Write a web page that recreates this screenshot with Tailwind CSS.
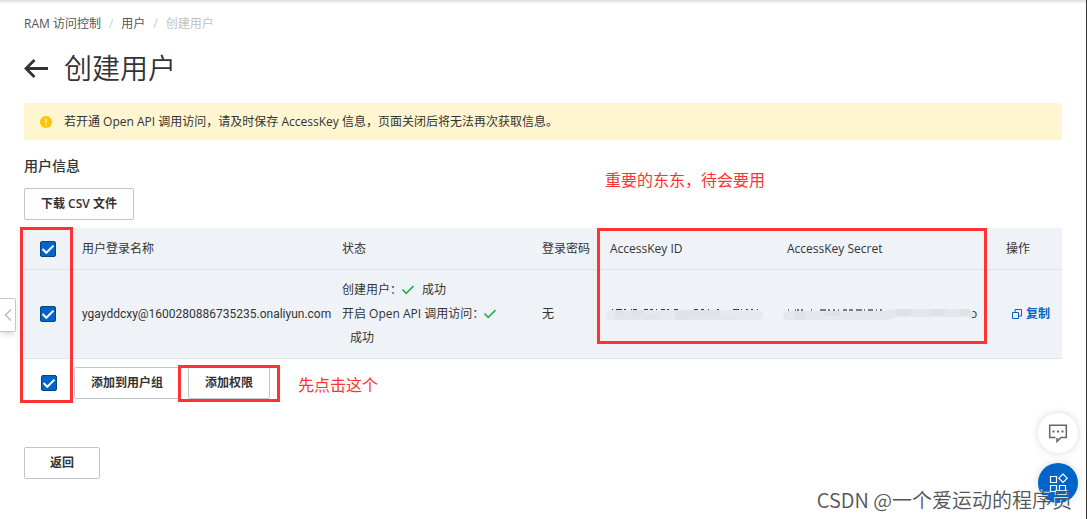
<!DOCTYPE html>
<html lang="zh-CN">
<head>
<meta charset="utf-8">
<title>创建用户</title>
<script src="https://cdn.jsdelivr.net/npm/@tailwindcss/browser@4"></script>
</head>
<body class="relative min-h-screen border-r border-[#333] bg-white font-['Open_Sans','Noto_Sans_CJK_SC',sans-serif] text-xs text-[#333]">
<div class="h-1 bg-linear-to-b from-[#dcdcdc] to-white"></div>
<main class="px-6">
  <nav aria-label="面包屑" class="flex h-10 items-center gap-2 text-[#555]">
    <a href="#">RAM 访问控制</a><span class="text-[#ccc]">/</span>
    <a href="#">用户</a><span class="text-[#ccc]">/</span>
    <span class="text-[#c1c1c1]">创建用户</span>
  </nav>
  <header class="flex h-12 items-center gap-4">
    <a href="#" aria-label="返回上一页">
      <svg class="h-6 w-6" viewBox="0 0 24 24" fill="none" stroke="#333" stroke-width="2.800"><path d="M24 12.500H2M10.500 4L2 12.500L10.500 21"/></svg>
    </a>
    <h1 class="text-[28px] leading-9 font-[350]">创建用户</h1>
  </header>
  <div role="alert" class="mt-[11px] flex h-[37px] items-center gap-3 rounded-xs bg-[#fff6d1] px-4">
    <svg class="h-3 w-3" viewBox="0 0 12 12"><circle cx="6" cy="6" r="6" fill="#ffc400"/><path d="M6 2.500V7M6 8.200V9.600" stroke="#fff6d1" stroke-width="1.400"/></svg>
    <p>若开通 Open API 调用访问，请及时保存 AccessKey 信息，页面关闭后将无法再次获取信息。</p>
  </div>

  <section class="relative pt-4">
    <h2 class="text-sm leading-5 font-medium">用户信息</h2>
    <p class="absolute top-7 left-[581px] text-base leading-6 text-[#ff3333]">重要的东东，待会要用</p>
    <button type="button" class="mt-3 block h-8 rounded-xs border border-[#c0c6cc] px-4 font-semibold">下载 CSV 文件</button>
  </section>

  <section class="relative mt-2">
    <table class="w-full table-fixed border-separate border-spacing-0 text-left">
      <colgroup>
        <col class="w-12"><col class="w-[260px]"><col class="w-[200px]"><col class="w-[68px]"><col class="w-[177px]"><col class="w-[219px]"><col>
      </colgroup>
      <thead>
        <tr class="h-[42px] bg-[#eff3f8]">
          <th class="border-b border-[#dee3e7] pl-4"><label class="relative block h-4 w-4"><input type="checkbox" checked aria-label="全选" class="block h-4 w-4 appearance-none rounded-xs border border-[#00458a] bg-[#0064c8]"><svg class="pointer-events-none absolute inset-0 h-4 w-4" viewBox="0 0 16 16" fill="none" stroke="#fff" stroke-width="2"><path d="M2.500 8L6.300 11.800L13.500 4.600"/></svg></label></th>
          <th class="border-b border-[#dee3e7] pl-[10px] font-normal">用户登录名称</th>
          <th class="border-b border-[#dee3e7] pl-[10px] font-normal">状态</th>
          <th class="border-b border-[#dee3e7] pl-[10px] font-normal">登录密码</th>
          <th class="border-b border-[#dee3e7] pl-[10px] font-normal">AccessKey ID</th>
          <th class="border-b border-[#dee3e7] pl-[10px] font-normal">AccessKey Secret</th>
          <th class="border-b border-[#dee3e7] pl-[10px] font-normal">操作</th>
        </tr>
      </thead>
      <tbody>
        <tr class="h-[89px] bg-[#eff3f8]">
          <td class="border-b border-[#dee3e7] pl-4"><label class="relative block h-4 w-4"><input type="checkbox" checked aria-label="选择用户" class="block h-4 w-4 appearance-none rounded-xs border border-[#00458a] bg-[#0064c8]"><svg class="pointer-events-none absolute inset-0 h-4 w-4" viewBox="0 0 16 16" fill="none" stroke="#fff" stroke-width="2"><path d="M2.500 8L6.300 11.800L13.500 4.600"/></svg></label></td>
          <td class="border-b border-[#dee3e7] pl-[10px] font-['Roboto','Noto_Sans_CJK_SC',sans-serif]">ygayddcxy@1600280886735235.onaliyun.com</td>
          <td class="border-b border-[#dee3e7] pl-[10px] leading-6">
            <p class="flex items-center">创建用户：<svg class="h-3 w-3" viewBox="0 0 12 12" fill="none" stroke="#22b14c" stroke-width="1.600"><path d="M.5 5.500L4.200 9.300L11.500 2"/></svg><span class="ml-2">成功</span></p>
            <p class="flex items-center whitespace-nowrap">开启 Open API 调用访问：<svg class="h-3 w-3" viewBox="0 0 12 12" fill="none" stroke="#22b14c" stroke-width="1.600"><path d="M.5 5.500L4.200 9.300L11.500 2"/></svg></p>
            <p class="pl-2">成功</p>
          </td>
          <td class="border-b border-[#dee3e7] pl-[10px]">无</td>
          <td class="border-b border-[#dee3e7] pl-1.5">
            <svg role="img" aria-label="已隐藏" class="h-4 w-[158px]" viewBox="0 0 158 16">
              <path d="M6 3.500H158" stroke="#3a3a3a" stroke-dasharray="1 3 6 2 2 5 1 1 4 7 4 2 3 3 1 4 4 2 2 5 4 16 4 3 3 4 1 8 2 14 6 2 1 4 2 3 2 4 1 90"/>
              <rect y="4" width="157" height="10" rx="5" fill="#e6eaf0"/>
              <path d="M9 4h9v4h-9zM24 4h15v4H24zM69 4h45v5H69zM69 9h15v5H69z" fill="#dfe3e8"/>
              <path d="M9 8h45v6H9zM84 9h45v5H84z" fill="#e2e6eb"/>
            </svg>
          </td>
          <td class="border-b border-[#dee3e7] pl-1.5">
            <svg role="img" aria-label="已隐藏" class="h-4 w-[196px]" viewBox="0 0 196 16">
              <path d="M5 4H103" stroke="#555" stroke-width="1.500" stroke-dasharray="1 6 1 1 2 2 2 8 1 8 6 2 2 3 2 3 1 4 4 2 4 3 6 2 1 3 5 3 1 3 2 90"/>
              <text x="187" y="12" font-size="12" fill="#333">o</text>
              <path d="M5 5H100L114 3H185Q192 5 192 11H114L103 14H6Q0 14 0 10Q0 6 5 5Z" fill="#e4e8ec"/>
              <path d="M12 5h10v9H12zM42 5h15v5H42zM114 3h14v6h-14zM147 3h15v6h-15zM177 3h10v6h-10z" fill="#dee1e6"/>
            </svg>
          </td>
          <td class="border-b border-[#dee3e7] pl-4 text-[#0064c8]"><button type="button" class="flex items-center gap-1 font-semibold whitespace-nowrap"><svg class="h-[10px] w-[10px]" viewBox="0 0 10 10" fill="none" stroke="#0064c8"><path d="M.5 3.500H6.500V9.500H.5ZM3 3.500V.5H9.500V7H6.500"/></svg>复制</button></td>
        </tr>
      </tbody>
    </table>
    <div class="flex h-12 items-center pl-[17px]">
      <label class="relative block h-4 w-4"><input type="checkbox" checked aria-label="选择全部用户" class="block h-4 w-4 appearance-none rounded-xs border border-[#00458a] bg-[#0064c8]"><svg class="pointer-events-none absolute inset-0 h-4 w-4" viewBox="0 0 16 16" fill="none" stroke="#fff" stroke-width="2"><path d="M2.500 8L6.300 11.800L13.500 4.600"/></svg></label>
      <button type="button" class="ml-[17px] h-8 rounded-xs border border-[#c0c6cc] px-4 font-semibold">添加到用户组</button>
      <div class="relative ml-2">
        <button type="button" class="block h-8 rounded-xs border border-[#c0c6cc] px-4 font-semibold">添加权限</button>
        <div class="pointer-events-none absolute -inset-x-[10px] -top-0.5 -bottom-[3px] border-3 border-[#ff3333]"></div>
      </div>
      <p class="mt-1 ml-7 text-base leading-6 text-[#ff3333]">先点击这个</p>
    </div>
    <div class="pointer-events-none absolute -top-px -left-1 h-44 w-[53px] border-3 border-[#ff3333]"></div>
    <div class="pointer-events-none absolute top-0 right-[75px] left-[573px] h-[116px] border-3 border-[#ff3333]"></div>
  </section>
  <button type="button" class="mt-10 h-8 rounded-xs border border-[#c0c6cc] px-[25px] font-semibold">返回</button>
</main>

<button type="button" aria-label="收起侧栏" class="absolute top-[298px] left-0 flex h-[34px] w-4 items-center justify-center rounded-r-xs border border-l-0 border-[#c4c8cd] bg-white shadow-md">
  <svg class="h-3 w-2" viewBox="0 0 8 12" fill="none" stroke="#b8bcc0" stroke-width="1.500"><path d="M7 .5L1.500 6L7 11.500"/></svg>
</button>
<div class="absolute right-2 bottom-4 flex flex-col gap-[10px]">
  <button type="button" aria-label="反馈" class="flex h-10 w-10 items-center justify-center rounded-full bg-white shadow-[0_0_8px_rgba(0,0,0,0.15)]">
    <svg class="h-5 w-5" viewBox="0 0 20 20" fill="none" stroke="#666" stroke-width="1.500"><path d="M7.500 14.500H1.700V2.200H18.300V14.500H13L9 18.500V15"/><path d="M4.500 8.500H6.500M9 8.500H11M13.500 8.500H15.500" stroke-width="2"/></svg>
  </button>
  <button type="button" aria-label="应用" class="flex h-10 w-10 items-center justify-center rounded-full bg-[#0064c8] shadow-[0_0_8px_rgba(0,0,0,0.15)]">
    <svg class="h-5 w-5" viewBox="0 0 20 20" fill="none" stroke="#fff" stroke-width="1.200"><path d="M2.500 3.500H8.500V9.500H2.500ZM2.500 12.500H8.500V18.500H2.500ZM11.500 12.500H17.500V18.500H11.500ZM15 1L19.200 5.200L15 9.400L10.800 5.200Z"/></svg>
  </button>
</div>
<p class="absolute right-[14px] bottom-[5px] font-['Noto_Sans_CJK_SC',sans-serif] text-xl leading-7 font-[350] whitespace-nowrap text-[#555] [text-shadow:-1px_-1px_0_#ffffffcc]">CSDN @一个爱运动的程序员</p>
</body>
</html>
